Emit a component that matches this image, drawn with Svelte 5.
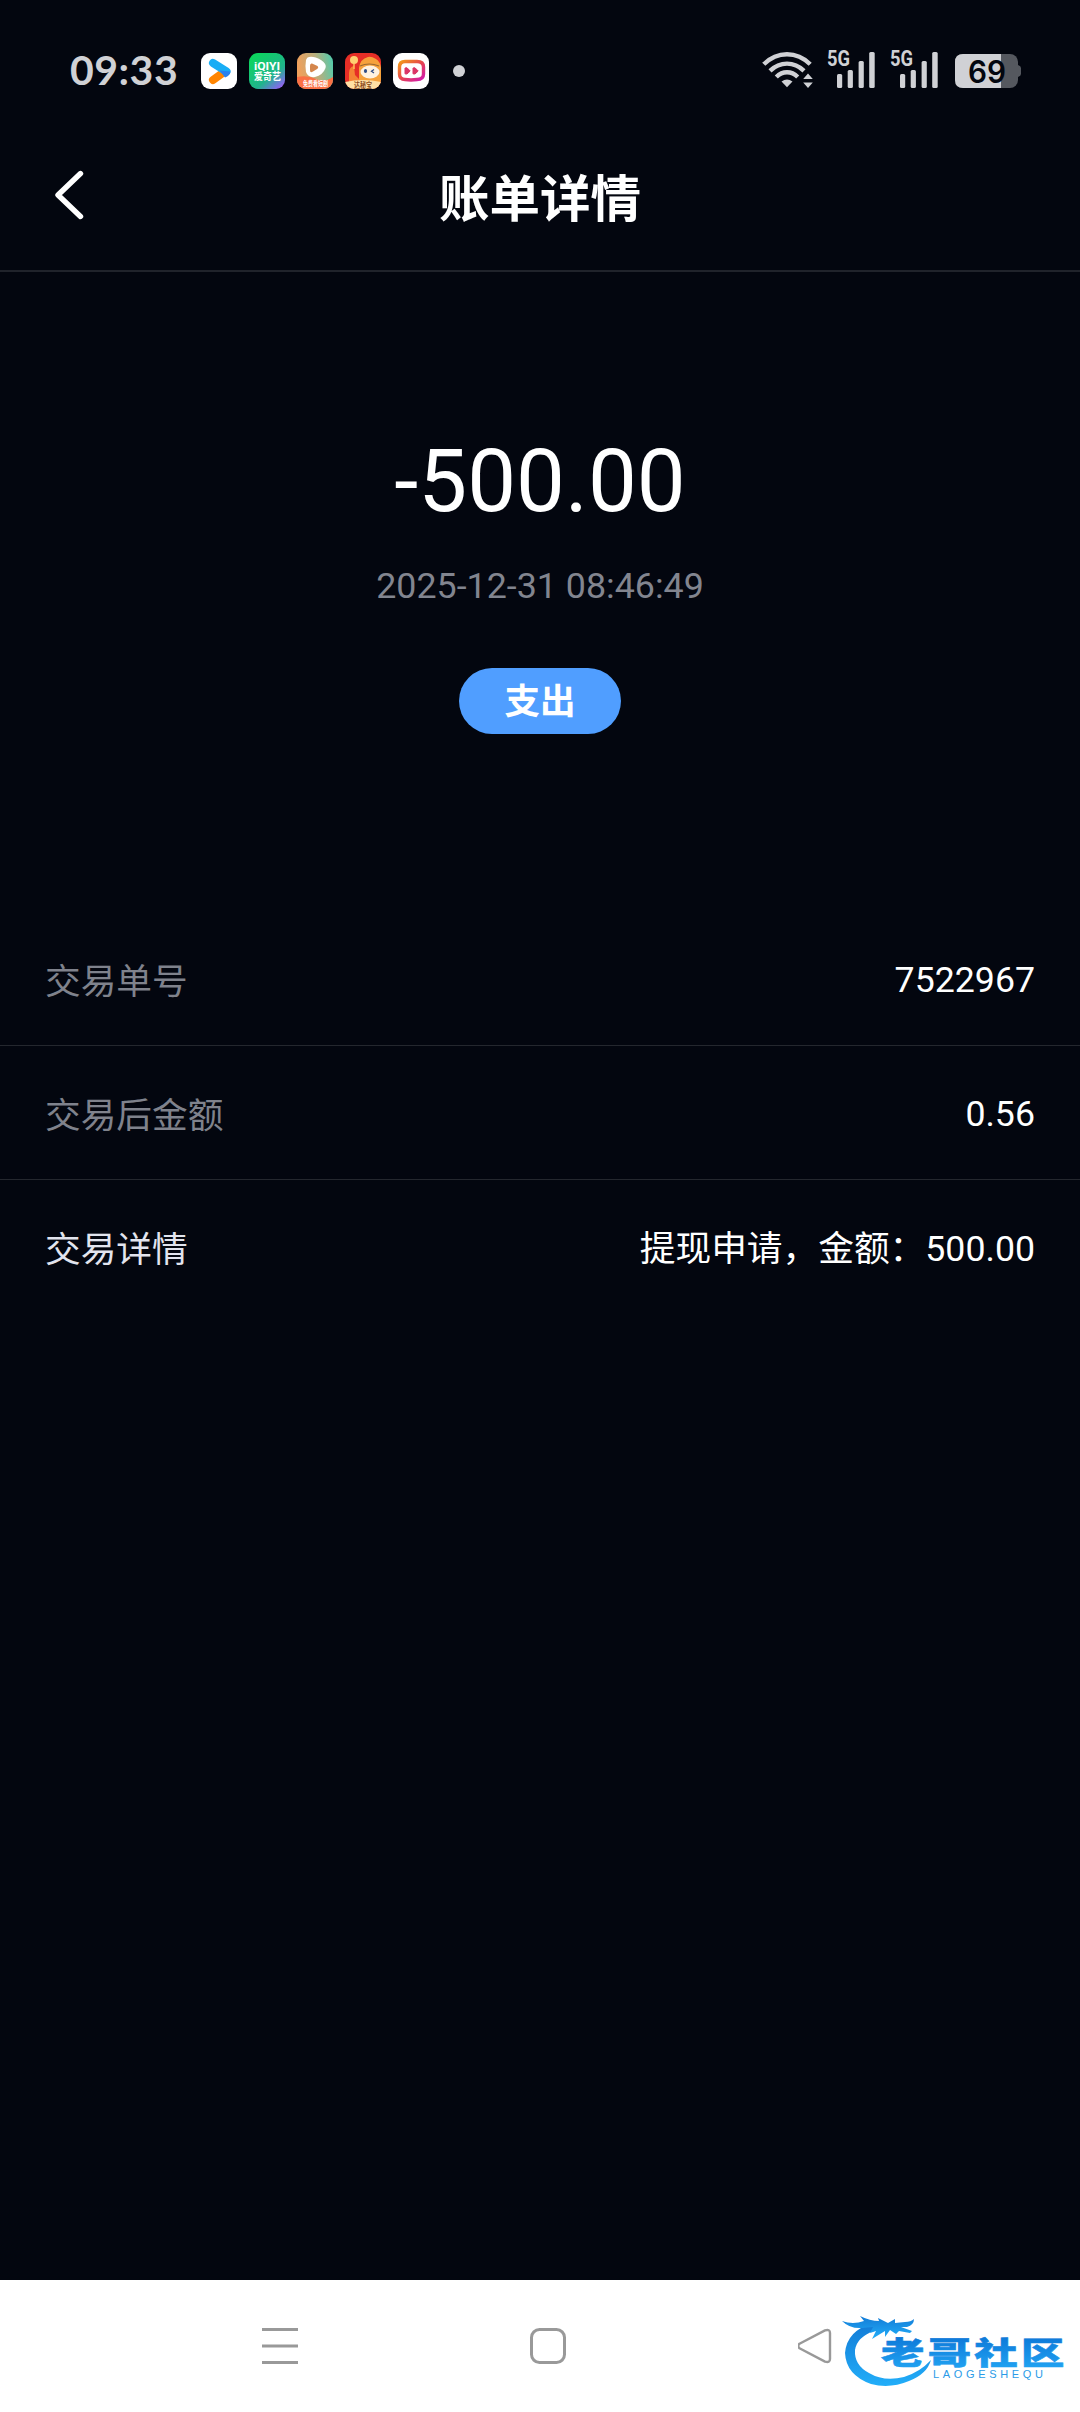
<script lang="ts">
  // Bill shown on this page
  const bill = {
    amount: '-500.00',
    time: '2025-12-31 08:46:49',
    type: '支出'
  };

  const rows = [
    { label: '交易单号', value: '7522967', strong: false },
    { label: '交易后金额', value: '0.56', strong: false },
    { label: '交易详情', value: '提现申请，金额：500.00', strong: true }
  ];

  // Two SIM cards, both on 5G
  const sims = [1, 2];
</script>

<main>
  <div class="status">
    <span class="clock">09:33</span>

    <div class="apps">
      <!-- Youku -->
      <svg class="app" viewBox="0 0 36 36">
        <rect width="36" height="36" rx="9" fill="#fff" />
        <path d="M12 27 L21 20.5" stroke="#ff8500" stroke-width="8" stroke-linecap="round" />
        <path d="M12 10 L25.5 18.5" stroke="#18adf5" stroke-width="8" stroke-linecap="round" />
        <path d="M18.5 17.5 L29.5 18.5 Q29 22.5 24 24.5 Z" fill="#2b82ee" />
      </svg>

      <!-- iQIYI -->
      <svg class="app" viewBox="0 0 36 36">
        <defs>
          <linearGradient id="iqiyi" x1="0.2" y1="0" x2="1" y2="1">
            <stop offset="0" stop-color="#0bd65c" />
            <stop offset="0.6" stop-color="#20b48c" />
            <stop offset="0.82" stop-color="#6c7bd8" />
            <stop offset="1" stop-color="#b44dff" />
          </linearGradient>
        </defs>
        <rect width="36" height="36" rx="9" fill="url(#iqiyi)" />
        <text x="5" y="17" class="tiny" font-size="11" textLength="26" lengthAdjust="spacingAndGlyphs">iQIYI</text>
        <text x="5" y="27.3" class="tiny" font-size="10" textLength="27" lengthAdjust="spacingAndGlyphs">爱奇艺</text>
      </svg>

      <!-- Short drama app -->
      <svg class="app" viewBox="0 0 36 36">
        <defs>
          <linearGradient id="drama" x1="0" y1="0.2" x2="1" y2="0">
            <stop offset="0" stop-color="#efa05c" />
            <stop offset="0.5" stop-color="#b9ae7d" />
            <stop offset="1" stop-color="#48ceb0" />
          </linearGradient>
          <clipPath id="appClip"><rect width="36" height="36" rx="9" /></clipPath>
        </defs>
        <g clip-path="url(#appClip)">
          <rect width="36" height="36" fill="url(#drama)" />
          <path d="M0 24 Q11 22 19 26 T36 24 V36 H0 Z" fill="#fa7045" />
          <path d="M12 4 Q17 3 24 7 Q30 11 28.5 15 Q26 22 18 24 Q11 25 9 19 Q8 12 9 7 Q10 4 12 4 Z" fill="#fff" />
          <path d="M15 10.5 Q13 10 13 13 V17 Q13 20.5 16 18.5 L20.5 15.7 Q22 14.4 20.5 13 Z" fill="#d4864c" />
          <text x="6" y="33" class="tiny" font-size="6.5" textLength="25" lengthAdjust="spacingAndGlyphs">免费看短剧</text>
        </g>
      </svg>

      <!-- Mascot app -->
      <svg class="app" viewBox="0 0 36 36">
        <g clip-path="url(#appClip)">
          <rect width="36" height="36" fill="#e62e26" />
          <path d="M14 36 V15 Q15 6 23 4 Q26 3 31 6 Q37 10 36 20 V36 Z" fill="#f6a13b" />
          <path d="M4 30 V20 Q4 14 9 13 L10 22 L16 28 Z" fill="#f58234" />
          <circle cx="9" cy="7" r="4" fill="#ffd071" />
          <path d="M9 11 V16" stroke="#ffbd58" stroke-width="1.5" />
          <path d="M15 13 Q24 9 34 13" stroke="#9b6932" stroke-width="1.2" fill="none" />
          <ellipse cx="25" cy="19" rx="9.5" ry="6.5" fill="#fff1df" />
          <ellipse cx="20.5" cy="18" rx="1.6" ry="2.1" fill="#304d86" />
          <path d="M29 16.5 L26.5 18.3 L29 20" stroke="#304d86" stroke-width="1.3" fill="none" />
          <path d="M0 29 Q18 25 36 29 V36 H0 Z" fill="#ffe0a5" />
          <text x="9" y="34.5" class="tiny brown" font-size="7.5" textLength="18" lengthAdjust="spacingAndGlyphs">达秘宝</text>
        </g>
      </svg>

      <!-- Video app -->
      <svg class="app" viewBox="0 0 36 36">
        <defs>
          <linearGradient id="video" x1="0" y1="0" x2="1" y2="1">
            <stop offset="0" stop-color="#f39a18" />
            <stop offset="0.5" stop-color="#e64450" />
            <stop offset="1" stop-color="#d018b0" />
          </linearGradient>
        </defs>
        <rect width="36" height="36" rx="9" fill="#fff" />
        <path d="M12 8.5 H24 Q30.5 8.5 30.5 14 V21 Q30.5 26.5 24 26.5 L18 27 L12 26.5 Q6.5 26.5 6.5 21 V14 Q6.5 8.5 12 8.5 Z" fill="none" stroke="url(#video)" stroke-width="3.4" />
        <path d="M12 15 L14 14.8 L17.2 18 L14 21 L12 20.8 Z M20 15 L22 14.8 L25.2 18 L22 21 L20 20.8 Z" fill="#db3566" stroke="#db3566" stroke-linejoin="round" />
      </svg>
    </div>

    <span class="dot"></span>

    <div class="signals">
      <svg class="wifi" width="52" height="36" viewBox="0 0 52 36">
        <g fill="none" stroke="#d0d1d5" stroke-width="4.4">
          <path d="M1.8 12.3 Q12 2.3 25 2.3 T48.2 12.3" />
          <path d="M8 18.8 Q15.5 11.6 25 11.6 T42 18.8" />
          <path d="M14.3 25 Q19 20.3 25 20.3 T35.7 25" />
        </g>
        <path d="M19.5 29.5 Q25 25.5 30.5 29.5 L25 35.3 Z" fill="#d0d1d5" />
        <path d="M46 21.5 L50.8 27 H41.2 Z M46 36 L50.8 30.5 H41.2 Z" fill="#d0d1d5" />
      </svg>

      {#each sims as sim (sim)}
        <svg class="sim" width="48" height="44" viewBox="0 -6 48 44">
          <text x="0" y="15.5" class="net" textLength="23" lengthAdjust="spacingAndGlyphs">5G</text>
          <g fill="#d0d1d5">
            <rect x="10" y="24" width="5.2" height="14" rx="1.5" />
            <rect x="20.7" y="20" width="5.2" height="18" rx="1.5" />
            <rect x="31.6" y="11" width="5.2" height="27" rx="1.5" />
            <rect x="42.2" y="2" width="5.5" height="36" rx="1.5" />
          </g>
        </svg>
      {/each}

      <svg class="battery" width="66" height="34" viewBox="0 0 66 34">
        <rect width="63" height="34" rx="8" fill="#55585f" />
        <path d="M63 11 Q66 12 66 14 V20 Q66 22 63 23 Z" fill="#55585f" />
        <path d="M8 0 H46 V34 H8 Q0 34 0 26 V8 Q0 0 8 0 Z" fill="#d0d1d5" />
        <text x="13" y="28.5" class="level" textLength="38" lengthAdjust="spacingAndGlyphs">69</text>
      </svg>
    </div>
  </div>

  <header>
    <button class="back" aria-label="返回">
      <svg width="30" height="50" viewBox="0 0 30 50">
        <path d="M26.5 3.5 L4 25 L26.5 46.5" fill="none" stroke="#fff" stroke-width="5.4" stroke-linecap="round" stroke-linejoin="round" />
      </svg>
    </button>
    <h1>账单详情</h1>
  </header>

  <section class="summary">
    <div class="amount">{bill.amount}</div>
    <div class="time">{bill.time}</div>
    <div class="tag">{bill.type}</div>
  </section>

  <section class="details">
    {#each rows as row}
      <div class="row">
        <span class="label" class:strong={row.strong}>{row.label}</span>
        <span class="value" class:mixed={row.strong}>{row.value}</span>
      </div>
    {/each}
  </section>

  <nav>
    <svg width="36" height="36" viewBox="0 0 36 36" stroke="#999" stroke-width="3">
      <path d="M0 1.5 H36 M0 18 H36 M0 34.5 H36" />
    </svg>
    <svg width="36" height="36" viewBox="0 0 36 36" fill="none" stroke="#999" stroke-width="3">
      <rect x="1.5" y="1.5" width="33" height="33" rx="8" />
    </svg>
    <svg width="36" height="36" viewBox="2 0 36 36" fill="none" stroke="#999" stroke-width="2.4" stroke-linejoin="round">
      <path d="M3.5 15.8 L29 2.4 Q34 0.8 34 5 V31 Q34 35.2 29 33.6 L3.5 20.2 Q0.8 18 3.5 15.8 Z" />
    </svg>

    <!-- Community logo sits over the nav bar -->
    <svg class="brand" width="226" height="80" viewBox="0 0 226 80">
      <defs>
        <linearGradient id="brand" x1="0" y1="0" x2="0" y2="1">
          <stop offset="0" stop-color="#137bd6" />
          <stop offset="1" stop-color="#22aef9" />
        </linearGradient>
        <linearGradient id="brandText" x1="0" y1="0" x2="0" y2="1">
          <stop offset="0.2" stop-color="#0d78d8" />
          <stop offset="1" stop-color="#24a8f5" />
        </linearGradient>
      </defs>
      <g fill="url(#brand)">
        <path d="M32 13 Q5 20 3 43 Q4 65 29 74 Q48 79 67 71 Q85 64 89 50 Q78 62 62 67 Q42 72 27 63 Q12 55 13 40 Q15 27 32 21 L40 14 Z" />
        <path d="M0 11 Q11 15 22 11 L18 6 Q28 11 37 11 L36 8 L46 13 L53 9 L53 13 L63 12 Q69 12 72 9 Q72 15 65 17 L59 17 L70 21 L68 23 L57 21 L54 24 L48 20 L43 27 L43 21 L30 29 L34 21 L28 23 L31 17 L20 18 Q8 19 0 11 Z" />
      </g>
      <text class="brand-cn" transform="translate(39 53.5) scale(1.4 1)" fill="url(#brandText)" stroke="url(#brandText)" stroke-width="0.6" textLength="131">老哥社区</text>
      <text class="brand-en" x="91" y="67.5" textLength="110">LAOGESHEQU</text>
    </svg>
  </nav>
</main>

<style>
  :global(body) {
    margin: 0;
    background: #03060f;
  }

  main {
    display: flex;
    flex-direction: column;
    height: 2412px;
    background: #03060f;
    color: #fff;
    font-family: Roboto, 'Noto Sans CJK SC', sans-serif;
    overflow: hidden;
  }

  svg {
    display: block;
    flex: none;
  }

  /* System status bar */
  .status {
    display: flex;
    align-items: center;
    box-sizing: border-box;
    height: 122px;
    padding: 20px 59px 0 70px;
  }

  .clock {
    width: 131px;
    padding-bottom: 3px;
    font: bold 41px/50px Lato, sans-serif;
    letter-spacing: 0.5px;
    color: #d0d1d5;
  }

  .apps {
    display: flex;
    gap: 12px;
  }

  .app {
    width: 36px;
    height: 36px;
  }

  .tiny {
    fill: #fff;
    font-family: Roboto, 'Noto Sans CJK SC', sans-serif;
    font-weight: bold;
  }

  .brown {
    fill: #8b4a1c;
  }

  .dot {
    width: 12px;
    height: 12px;
    margin-left: 24px;
    border-radius: 50%;
    background: #d0d1d5;
  }

  .signals {
    display: flex;
    align-items: center;
    margin-left: auto;
  }

  .wifi {
    margin: 0 13px 3px 0;
  }

  .sim {
    margin: 0 15px 10px 0;
  }

  .battery {
    margin-left: 2px;
  }

  .net {
    font: bold 22px Roboto, sans-serif;
    fill: #d0d1d5;
  }

  .level {
    font: 600 31px Inter, sans-serif;
    fill: #03060f;
  }

  /* Page title */
  header {
    display: grid;
    grid-template-columns: 140px 1fr 140px;
    align-items: center;
    height: 148px;
    border-bottom: 2px solid #20232b;
  }

  .back {
    padding: 0 0 2px 54px;
    border: none;
    background: none;
  }

  h1 {
    margin: 0;
    padding-top: 7px;
    font-size: 50.5px;
    line-height: 72px;
    font-weight: bold;
    text-align: center;
  }

  .summary {
    display: flex;
    flex-direction: column;
    align-items: center;
    padding-top: 158px;
  }

  .amount {
    font-size: 87px;
    line-height: 102px;
  }

  .time {
    margin-top: 33px;
    font-size: 35.8px;
    line-height: 42px;
    color: #82858f;
  }

  .tag {
    box-sizing: border-box;
    width: 162px;
    height: 66px;
    margin-top: 61px;
    padding-top: 3px;
    border-radius: 33px;
    background: #509eff;
    font-size: 35.6px;
    line-height: 63px;
    font-weight: bold;
    text-align: center;
  }

  .details {
    margin-top: 178px;
  }

  .row {
    display: flex;
    justify-content: space-between;
    align-items: center;
    height: 133px;
    padding: 0 45px;
    border-bottom: 1px solid #24272e;
    font-size: 35.7px;
  }

  .row:last-child {
    border-bottom: none;
  }

  .label {
    padding-bottom: 1px;
    color: #7f828c;
  }

  .strong {
    color: #e2e4ee;
  }

  .value {
    padding-top: 3px;
  }

  .mixed {
    padding: 0 0 2px;
  }

  /* Android navigation keys */
  nav {
    position: relative;
    display: flex;
    align-items: center;
    gap: 232px;
    height: 132px;
    margin-top: auto;
    padding-left: 262px;
    background: #fff;
  }

  .brand {
    position: absolute;
    top: 30px;
    right: 12px;
  }

  .brand-cn {
    font: 900 31px 'Noto Sans CJK SC', sans-serif;
  }

  .brand-en {
    font: 11px 'Liberation Sans', sans-serif;
    fill: #2a9be8;
  }
</style>
